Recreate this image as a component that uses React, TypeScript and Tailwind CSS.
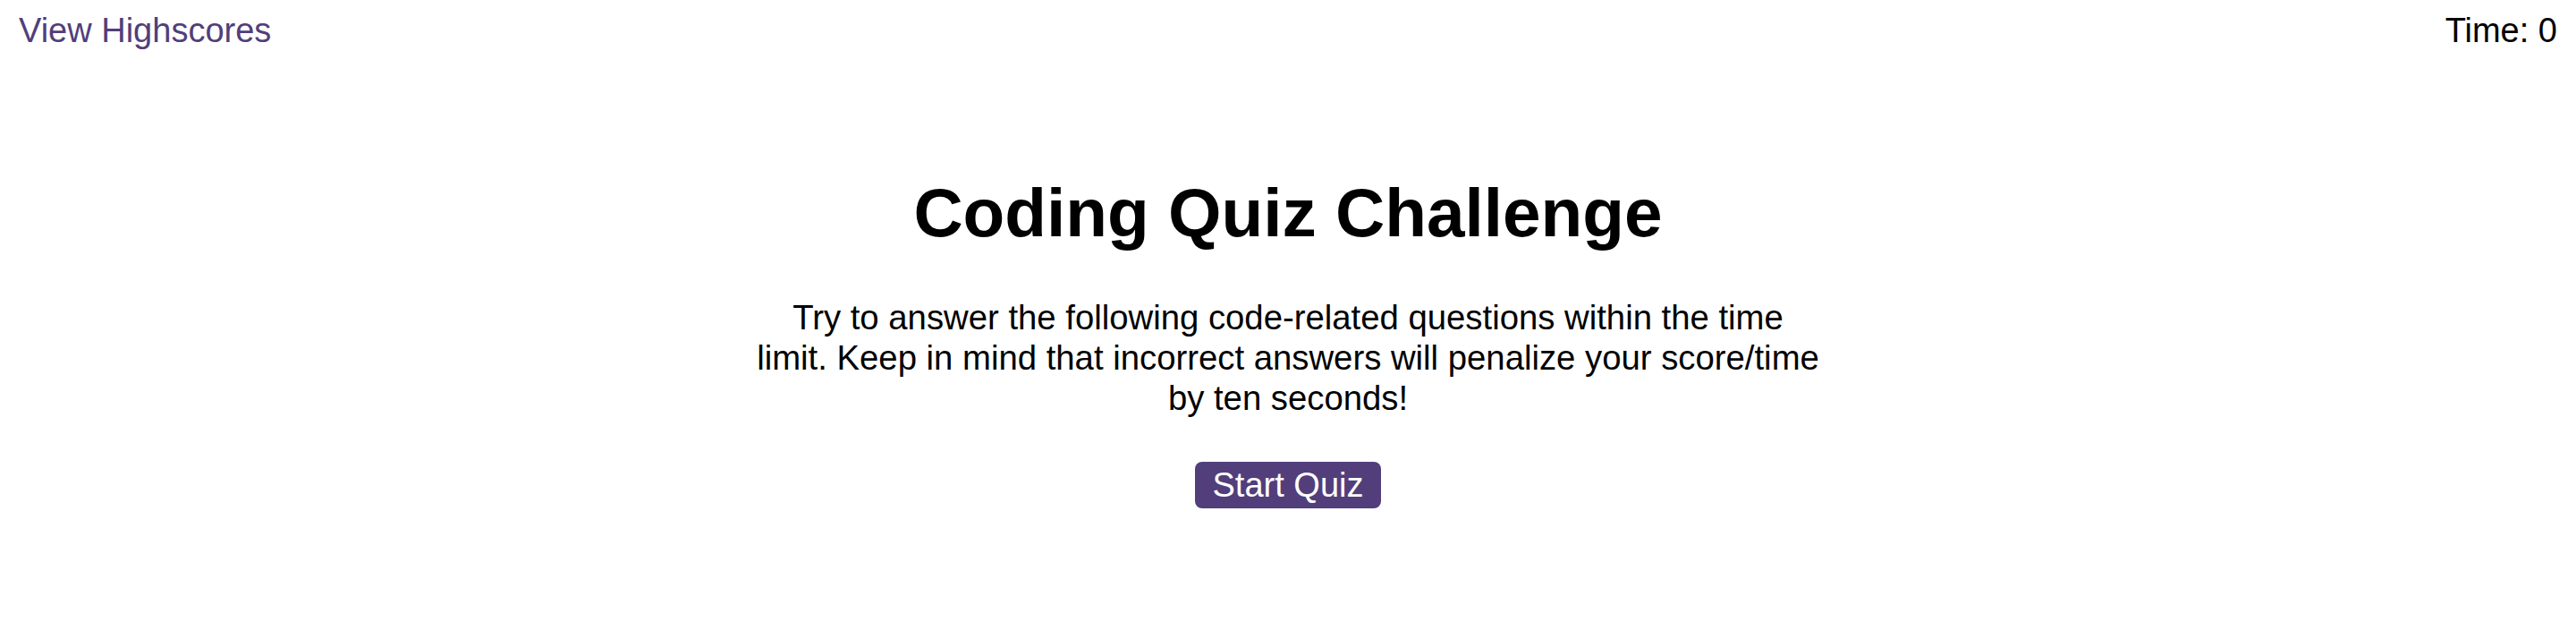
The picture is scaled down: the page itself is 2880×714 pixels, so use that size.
const App = () => {
  return (
    <div className="min-h-[714px] bg-white font-['Liberation_Sans',Arial,sans-serif] text-[38px] leading-[normal] text-black">
      <header className="flex items-start justify-between px-[21px] pt-[13px]">
        <a href="#" className="text-[#523e7b]">
          View Highscores
        </a>
        <div>Time: 0</div>
      </header>

      <main className="flex flex-col items-center">
        <h1 className="mt-[138px] text-[76.5px] font-bold leading-[normal]">Coding Quiz Challenge</h1>
        <p className="mt-[50px] w-[1260px] text-center text-[38.3px] leading-[45px]">
          Try to answer the following code-related questions within the time
          <br />
          limit. Keep in mind that incorrect answers will penalize your score/time
          <br />
          by ten seconds!
        </p>
        <button className="mt-[49px] flex h-[52px] items-center rounded-[8px] bg-[#523e7b] px-[20px] text-white">
          Start Quiz
        </button>
      </main>
    </div>
  );
};

export default App;
